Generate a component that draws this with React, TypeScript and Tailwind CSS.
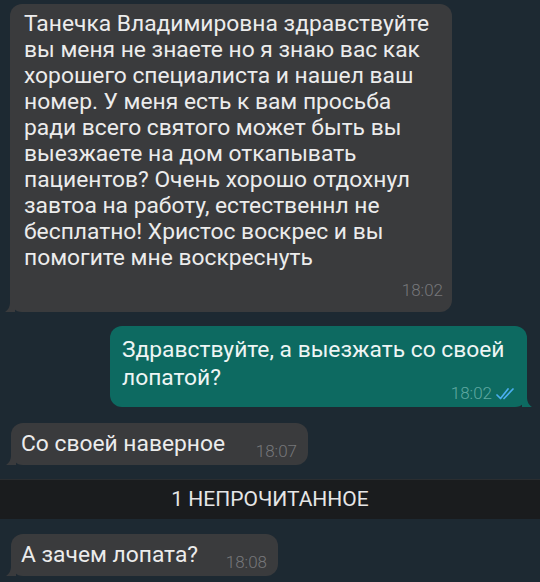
import React from "react";

const FONT = { fontFamily: "Roboto, 'Open Sans', 'Liberation Sans', sans-serif" };

function InTail() {
  return (
    <svg className="absolute bottom-0 -left-[7px]" width="12" height="16" viewBox="0 0 12 16">
      <path d="M12 0 L12 16 L2 16 C5 14 7 11 7 6 L7 0 Z" fill="#3a3b3d" />
    </svg>
  );
}

function OutTail() {
  return (
    <svg className="absolute bottom-0 -right-[7px]" width="12" height="16" viewBox="0 0 12 16">
      <path d="M0 0 L0 16 L10 16 C7 14 5 11 5 6 L5 0 Z" fill="#0d6a61" />
    </svg>
  );
}

function Checks() {
  return (
    <svg width="22" height="13" viewBox="0 0 22 13" className="ml-[4px]">
      <path d="M1 8 L4.5 11.5 L12 2" fill="none" stroke="#4aaef0" strokeWidth="1.7" strokeLinecap="round" strokeLinejoin="round" />
      <path d="M8 11.5 L17 2" fill="none" stroke="#4aaef0" strokeWidth="1.7" strokeLinecap="round" strokeLinejoin="round" />
    </svg>
  );
}

function SmallIn({ text, time, width }: { text: string; time: string; width: string }) {
  return (
    <div className={`relative ml-[11px] flex h-[42px] items-center justify-between rounded-[12px] bg-[#3a3b3d] pl-[10px] pr-[11px] ${width}`}>
      <span className="text-[22.8px] leading-[28px] text-[#ececec]">{text}</span>
      <span className="mt-[14px] text-[17px] font-light leading-[18px] text-[#76777a]">{time}</span>
      <InTail />
    </div>
  );
}

export default function App() {
  return (
    <div className="h-[582px] w-[540px] overflow-hidden bg-[#1d2932]" style={FONT}>
      <div className="pt-[4px]">
        <div className="relative ml-[10px] flex w-[442px] flex-col rounded-[12px] bg-[#3a3b3d] pb-[13px] pl-[14px] pr-[9px] pt-[7px]">
          <p className="whitespace-nowrap text-[22.8px] leading-[26px] text-[#ececec]">
            Танечка Владимировна здравствуйте
            <br />
            вы меня не знаете но я знаю вас как
            <br />
            хорошего специалиста и нашел ваш
            <br />
            номер. У меня есть к вам просьба
            <br />
            ради всего святого может быть вы
            <br />
            выезжаете на дом откапывать
            <br />
            пациентов? Очень хорошо отдохнул
            <br />
            завтоа на работу, естественнл не
            <br />
            бесплатно! Христос воскрес и вы
            <br />
            помогите мне воскреснуть
          </p>
          <span className="mt-[10px] self-end text-[17px] font-light leading-[18px] text-[#76777a]">18:02</span>
          <InTail />
        </div>

        <div className="relative ml-auto mr-[13px] mt-[14px] flex w-[417px] flex-col rounded-[12px] bg-[#0d6a61] pb-[5px] pl-[12px] pr-[9px] pt-[10px]">
          <p className="whitespace-nowrap text-[22.8px] leading-[28px] text-[#eef5f4]">
            Здравствуйте, а выезжать со своей
            <br />
            лопатой?
          </p>
          <div className="-mt-[8px] flex items-center self-end">
            <span className="text-[17px] font-light leading-[18px] text-[#5fa8a0]">18:02</span>
            <Checks />
          </div>
          <OutTail />
        </div>

        <div className="mt-[16px]">
          <SmallIn text="Со своей наверное" time="18:07" width="w-[297px]" />
        </div>

        <div className="mt-[14px] flex h-[40px] items-center justify-center border-t border-[#2a2d30] bg-[#1a1c1e]">
          <span className="text-[21px] text-[#e6e6e6]">1 НЕПРОЧИТАННОЕ</span>
        </div>

        <div className="mt-[15px]">
          <SmallIn text="А зачем лопата?" time="18:08" width="w-[267px]" />
        </div>
      </div>
    </div>
  );
}
